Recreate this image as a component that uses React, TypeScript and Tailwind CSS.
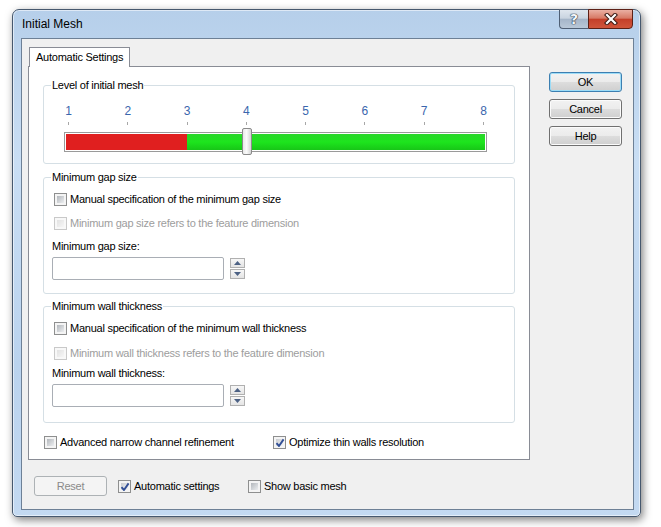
import React from 'react';

const levels = [1, 2, 3, 4, 5, 6, 7, 8];
const step = 415 / 7;

function CheckBox({ label, checked = false, disabled = false }: { label: string; checked?: boolean; disabled?: boolean }) {
    return (
        <div className="flex items-center h-[16px]">
            <div className={`relative w-[13px] h-[13px] border p-[2px] ${disabled ? 'border-[#c9c9c9] bg-[#f8f8f8]' : 'border-[#8e8f8f] bg-[#f4f4f4]'}`}>
                <div
                    className={`w-full h-full ${
                        disabled
                            ? 'bg-[linear-gradient(135deg,#e2e2e2,#f6f6f6)]'
                            : checked
                            ? 'bg-[linear-gradient(135deg,#c9ccd1,#f3f4f5)]'
                            : 'bg-[linear-gradient(135deg,#b3b7bc,#eceef0)]'
                    }`}
                />
                {checked && (
                    <svg className="absolute left-[1px] top-[1px]" width="10" height="10" viewBox="0 0 10 10">
                        <path d="M1.5 5.2 L4 8 L8.6 1.4" fill="none" stroke="#324f96" strokeWidth="1.9" strokeLinejoin="round" />
                    </svg>
                )}
            </div>
            <span className={`ml-[3px] whitespace-nowrap ${disabled ? 'text-[#9d9d9d]' : 'text-black'}`}>{label}</span>
        </div>
    );
}

function WinButton({ label, isDefault = false, disabled = false }: { label: string; isDefault?: boolean; disabled?: boolean }) {
    const look = disabled
        ? 'border-[#adb2b5] bg-[#f4f4f4] text-[#8a8a8a]'
        : isDefault
        ? 'border-[#3c7fb1] bg-[linear-gradient(to_bottom,#f2f2f2_0%,#ebebeb_50%,#dddddd_50%,#cfcfcf_100%)] shadow-[inset_0_0_0_1px_#9cdcf7] text-black'
        : 'border-[#707070] bg-[linear-gradient(to_bottom,#f2f2f2_0%,#ebebeb_50%,#dddddd_50%,#cfcfcf_100%)] shadow-[inset_0_0_0_1px_#fbfbfb] text-black';
    return (
        <button className={`w-[73px] h-[20px] rounded-[3px] border flex items-center justify-center leading-none ${look}`}>
            {label}
        </button>
    );
}

function Spinner() {
    return (
        <div className="ml-[6px] flex flex-col gap-[1px]">
            <div className="w-[15px] h-[10px] border border-[#b0b0b0] bg-[linear-gradient(to_bottom,#f7f7f7,#e4e4e4)] flex items-center justify-center">
                <svg width="7" height="4" viewBox="0 0 7 4">
                    <path d="M3.5 0 L7 4 L0 4Z" fill="#4c6184" />
                </svg>
            </div>
            <div className="w-[15px] h-[10px] border border-[#b0b0b0] bg-[linear-gradient(to_bottom,#f7f7f7,#e4e4e4)] flex items-center justify-center">
                <svg width="7" height="4" viewBox="0 0 7 4">
                    <path d="M0 0 L7 0 L3.5 4Z" fill="#4c6184" />
                </svg>
            </div>
        </div>
    );
}

function SizeGroup({ title, manual, refers, field, gap2, gap3, gap4 }: { title: string; manual: string; refers: string; field: string; gap2: string; gap3: string; gap4: string }) {
    return (
        <div className="relative mx-[14px] h-[117px] rounded-[3px] border border-[#d5dfe5]" style={{ marginTop: gap4 }}>
            <span className="absolute -top-[8px] left-[7px] bg-white px-[1px] leading-[14px]">{title}</span>
            <div className="ml-[10px] mt-[13px]">
                <CheckBox label={manual} />
            </div>
            <div className="ml-[10px]" style={{ marginTop: gap2 }}>
                <CheckBox label={refers} disabled />
            </div>
            <div className="ml-[8px] leading-[16px]" style={{ marginTop: gap3 }}>
                {field}
            </div>
            <div className="ml-[8px] flex items-center mt-[3px]">
                <div className="w-[172px] h-[23px] rounded-[2px] border border-[#a9aeb5] bg-white" />
                <Spinner />
            </div>
        </div>
    );
}

export default function App() {
    return (
        <div className="w-[661px] h-[527px] bg-white pl-[12px] pt-[9px] font-['Liberation_Sans',Arial,sans-serif] text-[11px] tracking-[-0.25px] text-black">
            <div className="w-[629px] h-[508px] flex flex-col rounded-t-[7px] rounded-b-[5px] border border-[#46586e] bg-[linear-gradient(to_bottom,#b6cfea,#c9def4_30%,#bad3ee_70%,#c3d9f1)] shadow-[inset_0_0_0_1px_rgba(255,255,255,0.55),2px_3px_9px_rgba(0,0,0,0.5)]">
                {/* title bar */}
                <div className="flex h-[28px] shrink-0">
                    <span className="self-center ml-[9px] text-[12px] tracking-normal">Initial Mesh</span>
                    <div className="ml-auto mr-[7px] -mt-[1px] flex h-[20px]">
                        <div className="w-[29px] h-full rounded-bl-[4px] border border-r-0 border-[#4f5f74] bg-[linear-gradient(to_bottom,#dfe6ee_0%,#c9d4e0_45%,#a6b6c9_52%,#b9c8d8_100%)] flex items-center justify-center">
                            <span className="font-['DejaVu_Sans',sans-serif] font-bold text-[14px] leading-none text-[#f4f6f9] [text-shadow:0_0_1px_#1e2c40,0_0_1px_#1e2c40,0_0_1px_#1e2c40]">?</span>
                        </div>
                        <div className="w-[45px] h-full rounded-br-[4px] border border-[#5c2016] bg-[linear-gradient(to_bottom,#eab0a3_0%,#d77a66_45%,#c4402a_52%,#d0553b_100%)] flex items-center justify-center">
                            <svg width="14" height="12" viewBox="0 0 14 12">
                                <path d="M3 2 L11 10 M11 2 L3 10" stroke="#3b1a14" strokeWidth="4.2" strokeLinecap="square" />
                                <path d="M3 2 L11 10 M11 2 L3 10" stroke="#ffffff" strokeWidth="2.2" strokeLinecap="square" />
                            </svg>
                        </div>
                    </div>
                </div>

                {/* client area */}
                <div className="flex-1 ml-[8px] mr-[6px] mb-[6px] border border-[#6d8096] bg-[#f0f0f0] pt-[8px]">
                    <div className="flex items-start pl-[6px]">
                        {/* tab control */}
                        <div className="w-[502px]">
                            <div className="flex h-[19px]">
                                <div className="relative z-10 ml-[1px] w-[101px] h-[20px] border border-b-0 border-[#898c95] bg-white pl-[6px] flex items-center">
                                    Automatic Settings
                                </div>
                            </div>
                            <div className="h-[394px] border border-[#898c95] bg-white">
                                {/* level group */}
                                <div className="relative mx-[14px] mt-[18px] h-[79px] rounded-[3px] border border-[#d5dfe5]">
                                    <span className="absolute -top-[8px] left-[7px] bg-white px-[1px] leading-[14px]">Level of initial mesh</span>
                                    <div className="relative ml-[20px] mt-[14px] w-[423px] h-[56px]">
                                        {levels.map((n, i) => (
                                            <span
                                                key={n}
                                                className="absolute top-[4px] -translate-x-1/2 text-[12px] leading-[14px] tracking-normal text-[#3a66ad]"
                                                style={{ left: 4.5 + i * step }}
                                            >
                                                {n}
                                            </span>
                                        ))}
                                        {levels.map((n, i) => (
                                            <span key={'t' + n} className="absolute top-[22px] w-[1px] h-[3px] bg-[#a7a7a7]" style={{ left: 4 + Math.round(i * step) }} />
                                        ))}
                                        <div className="absolute top-[32px] left-0 w-[423px] h-[20px] border border-[#9a9a9a] p-[1px] flex bg-white">
                                            <div className="w-[121px] h-full bg-[#e01f1f]" />
                                            <div className="flex-1 h-full bg-[linear-gradient(to_bottom,#2ad62a,#1de51d_50%,#17c617)]" />
                                        </div>
                                        <div className="absolute top-[28px] left-[178px] w-[10px] h-[27px] rounded-[2px] border border-[#8a8a8a] bg-[linear-gradient(to_right,#e9e9e9,#fbfbfb_45%,#d4d4d4)]" />
                                    </div>
                                </div>

                                <SizeGroup
                                    title="Minimum gap size"
                                    manual="Manual specification of the minimum gap size"
                                    refers="Minimum gap size refers to the feature dimension"
                                    field="Minimum gap size:"
                                    gap2="8px"
                                    gap3="7px"
                                    gap4="13px"
                                />
                                <SizeGroup
                                    title="Minimum wall thickness"
                                    manual="Manual specification of the minimum wall thickness"
                                    refers="Minimum wall thickness refers to the feature dimension"
                                    field="Minimum wall thickness:"
                                    gap2="9px"
                                    gap3="4px"
                                    gap4="12px"
                                />

                                <div className="flex mt-[11px] ml-[15px]">
                                    <div className="w-[229px]">
                                        <CheckBox label="Advanced narrow channel refinement" />
                                    </div>
                                    <CheckBox label="Optimize thin walls resolution" checked />
                                </div>
                            </div>
                        </div>

                        {/* right buttons */}
                        <div className="ml-[19px] mt-[25px] flex flex-col gap-[7px]">
                            <WinButton label="OK" isDefault />
                            <WinButton label="Cancel" />
                            <WinButton label="Help" />
                        </div>
                    </div>

                    {/* bottom row */}
                    <div className="flex items-center mt-[16px] ml-[12px]">
                        <WinButton label="Reset" disabled />
                        <div className="ml-[11px] w-[130px]">
                            <CheckBox label="Automatic settings" checked />
                        </div>
                        <CheckBox label="Show basic mesh" />
                    </div>
                </div>
            </div>
        </div>
    );
}
